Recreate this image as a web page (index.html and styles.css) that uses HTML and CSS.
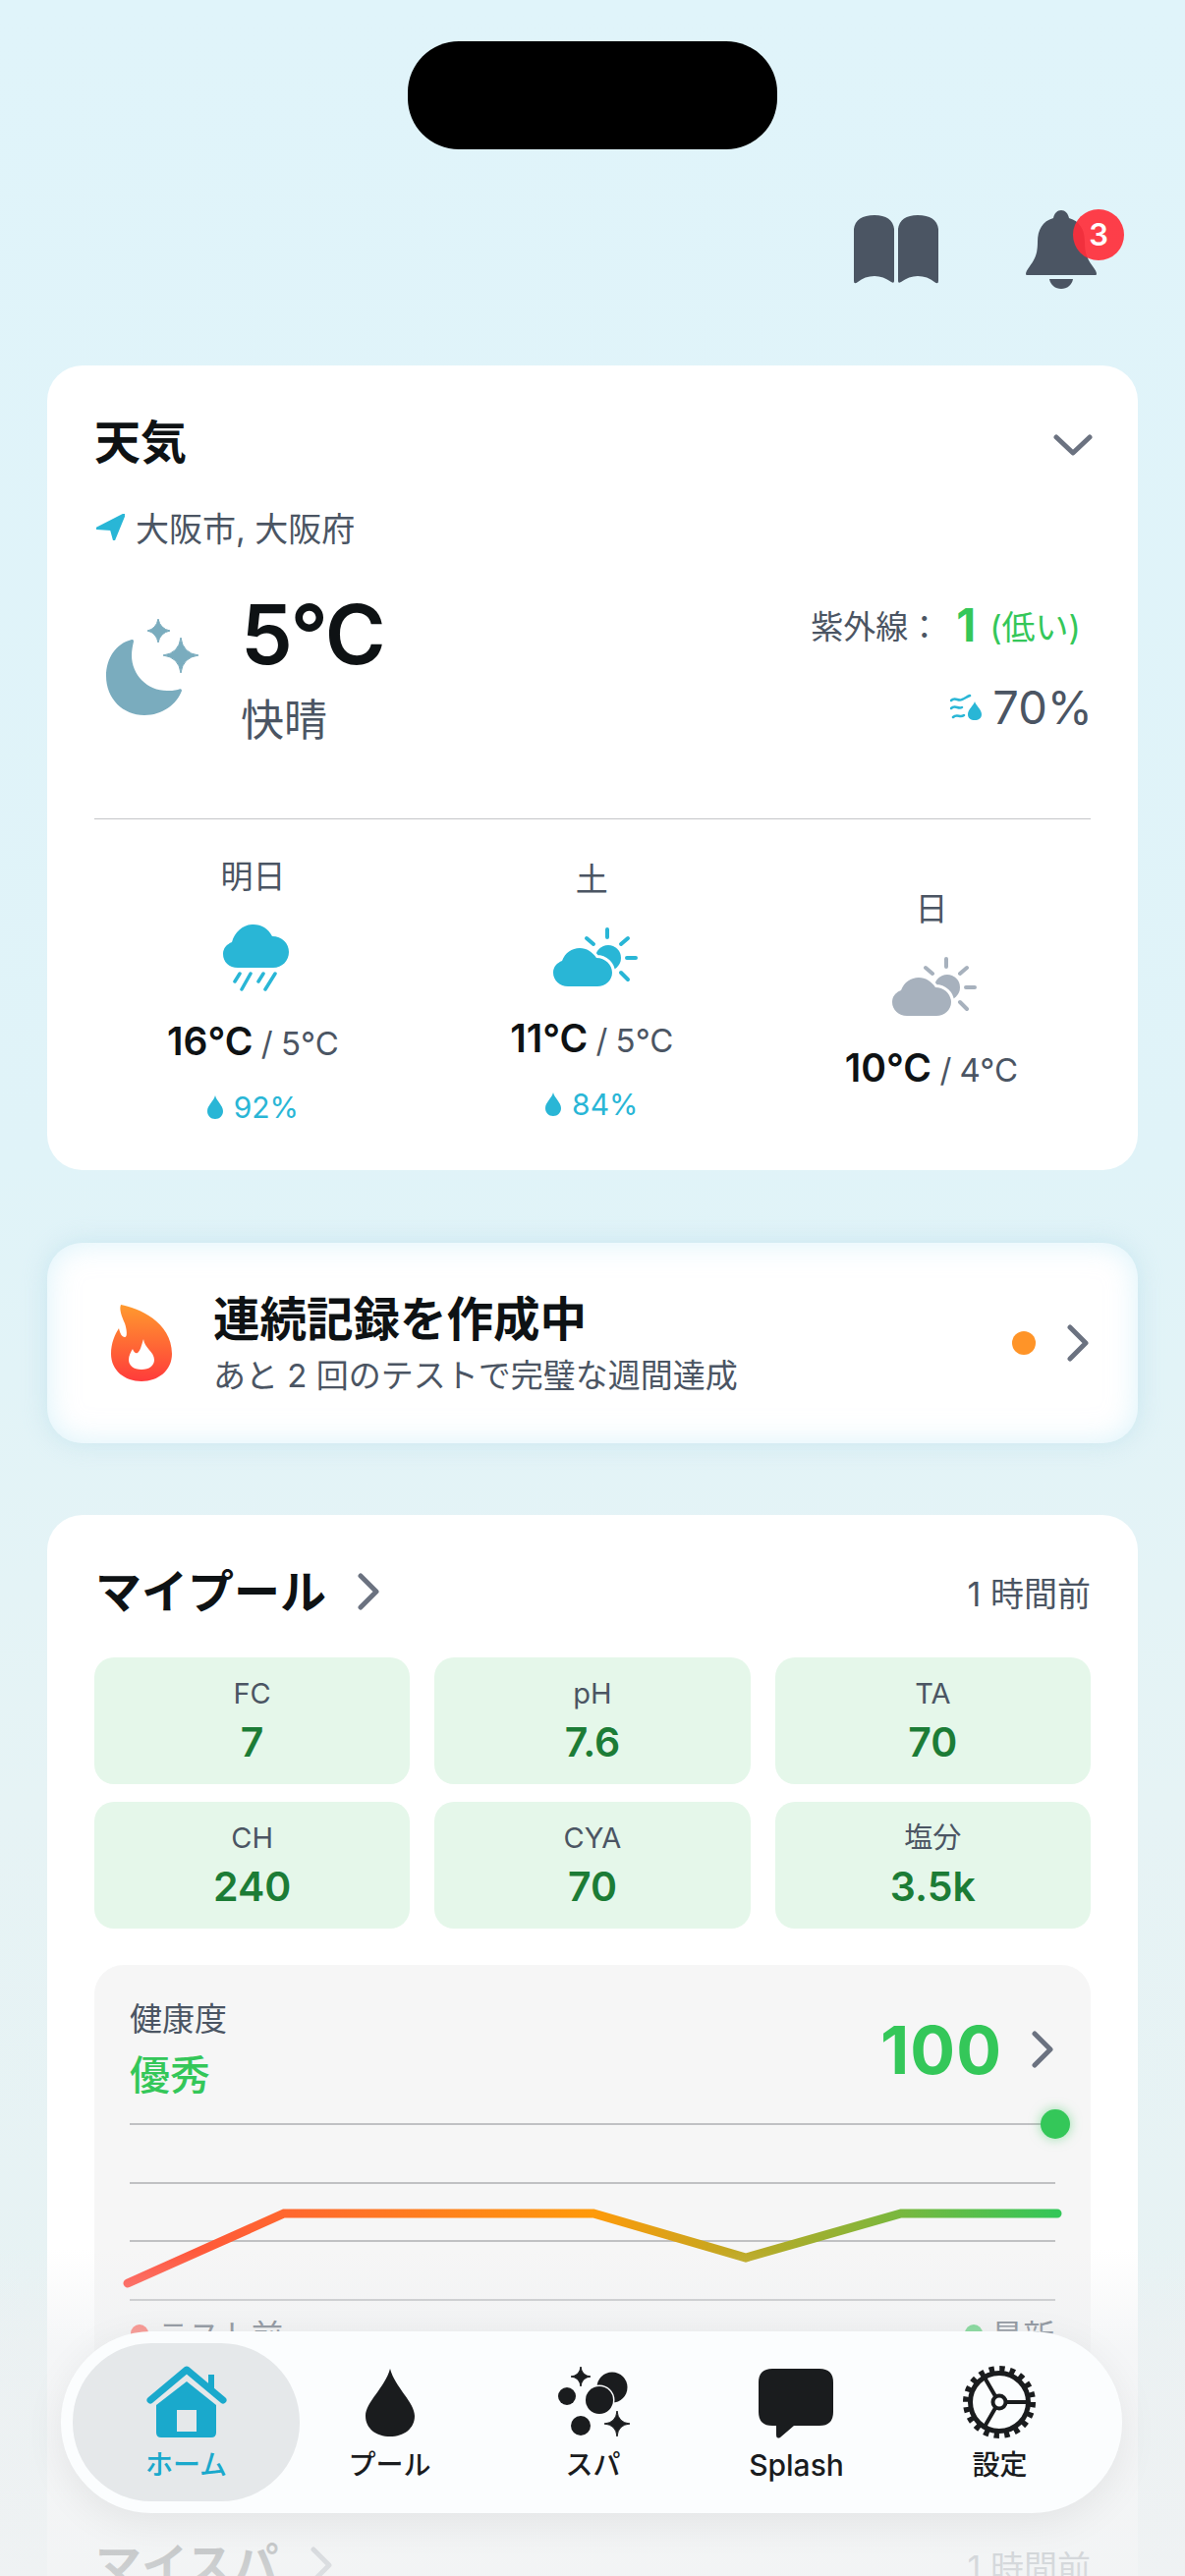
FILE: index.html
```html
<!DOCTYPE html>
<html lang="ja">
<head>
    <meta charset="UTF-8">
    <meta name="viewport" content="width=device-width, initial-scale=1.0">
    <title>ホーム</title>
    <link rel="stylesheet" href="styles.css">
</head>
<body>
    <svg class="defs">
        <defs>
            <linearGradient id="flame_grad" x1="0" y1="0" x2="0" y2="1">
                <stop offset="0" stop-color="#ff9a2e"/>
                <stop offset="1" stop-color="#ff3b3b"/>
            </linearGradient>
            <linearGradient id="line_grad" gradientUnits="userSpaceOnUse" x1="130" y1="0" x2="1076" y2="0">
                <stop offset="0" stop-color="#ff4d42"/>
                <stop offset="0.5" stop-color="#ff9a0a"/>
                <stop offset="1" stop-color="#34c759"/>
            </linearGradient>
        </defs>
        <symbol id="chevron" viewBox="0 0 22 38">
            <path d="M3 3 L19 19 L3 35" fill="none" stroke="currentColor" stroke-width="5" stroke-linecap="round" stroke-linejoin="round"/>
        </symbol>
        <symbol id="drop" viewBox="0 0 16 24">
            <path d="M8 0 C9.500 6 16 10 16 16 C16 20.500 12.500 24 8 24 C3.500 24 0 20.500 0 16 C0 10 6.500 6 8 0Z" fill="currentColor"/>
        </symbol>
        <symbol id="sun_cloud" viewBox="560 942 90 64">
            <circle cx="619" cy="974" r="13" fill="currentColor"/>
            <path d="M578 1003 C570 1003 563 997 563 989 C563 983 567 979 572 977 C575 969 582 964 590 964 C597 964 603 968 607 974 C616 974 623 981 623 989 C623 997 616 1003 608 1003Z" fill="currentColor" stroke="#fff" stroke-width="6" paint-order="stroke"/>
            <path d="M618 945 V953 M597 954 L604 960 M639 954 L632 960 M638 974 H647 M632 989 L639 996" fill="none" stroke="currentColor" stroke-width="4" stroke-linecap="round"/>
        </symbol>
    </svg>

    <div class="island"></div>

    <header class="topbar">
        <svg class="book" viewBox="0 0 86 70">
            <path d="M0 14 Q2 0 21 0 Q39 0 41 14 V67 Q41 70 38 68 Q30 62 21 62 Q11 62 4 68 Q0 71 0 67Z"/>
            <path d="M45 14 Q47 0 65 0 Q84 0 86 14 V67 Q86 71 82 68 Q75 62 65 62 Q56 62 48 68 Q45 70 45 67Z"/>
        </svg>
        <div class="bell_wrap">
            <svg class="bell" viewBox="0 0 72 80">
                <path d="M36 0 C32 0 29 3 28 8 C17 11 12 20 12 32 C12 45 9 50 4 57 C1 61 0 63 0 65 C0 66 1 66 3 66 H69 C71 66 72 66 72 65 C72 63 71 61 68 57 C63 50 60 45 60 32 C60 20 55 11 44 8 C43 3 40 0 36 0Z"/>
                <path d="M24 70 H48 C47 76 42 80 36 80 C30 80 25 76 24 70Z"/>
            </svg>
            <span class="badge">3</span>
        </div>
    </header>

    <section class="card weather">
        <div class="row_between weather_head">
            <h2 class="title_sm">天気</h2>
            <svg class="chev_down" viewBox="0 0 40 22"><path d="M3 3 L20 19 L37 3" fill="none" stroke="currentColor" stroke-width="5" stroke-linecap="round" stroke-linejoin="round"/></svg>
        </div>
        <div class="location">
            <svg class="loc_icon" viewBox="98 525 29 27"><path d="M127 525 L98 540 L113 541 L116 552Z" fill="#29b6d6" stroke="#29b6d6" stroke-width="2" stroke-linejoin="round"/></svg>
            <span>大阪市, 大阪府</span>
        </div>
        <div class="now">
            <svg class="moon" viewBox="100 625 105 110">
                <g fill="#7aacbe">
                    <path d="M134 651 C118 655 108 670 108 688 C108 711 125 728 147 728 C165 728 180 717 185 703 C185 701 183 701 181 702 C177 703 173 703 170 703 C150 703 134 687 134 667 C134 662 135 657 136 653 C136 651 135 651 134 651Z"/>
                    <path d="M161 630 Q163 640 173 642 Q163 644 161 654 Q159 644 150 642 Q159 640 161 630Z" stroke="#7aacbe" stroke-linejoin="round"/>
                    <path d="M184 649 Q186 665 202 667 Q186 669 184 685 Q182 669 166 667 Q182 665 184 649Z" stroke="#7aacbe" stroke-linejoin="round"/>
                </g>
            </svg>
            <div class="now_main">
                <div class="temp_big">5°C</div>
                <div class="condition">快晴</div>
            </div>
            <div class="now_side">
                <div class="uv"><span>紫外線：</span><b>1</b><span class="uv_text">(低い)</span></div>
                <div class="humidity">
                    <svg class="hum_icon" viewBox="0 0 34 28">
                        <path d="M1 7 C5 3 8 8 12 6 C15 5 17 3 20 2 M1 15 C5 11 8 16 12 14 M3 24 C7 20 10 25 14 22" fill="none" stroke="#29b6d6" stroke-width="2.500" stroke-linecap="round"/>
                        <path d="M25 8 C26 12 32 16 32 21 C32 25 29 27 25 27 C21 27 18 25 18 21 C18 16 24 12 25 8Z" fill="#29b6d6"/>
                    </svg>
                    <span>70%</span>
                </div>
            </div>
        </div>
        <div class="forecast">
            <div class="day">
                <div class="day_name">明日</div>
                <svg class="rain_icon" viewBox="220 938 80 72">
                    <path d="M240 985 C231 985 225 979 225 971 C225 965 229 961 234 959 C237 948 246 941 256 941 C264 941 271 945 275 953 C285 953 292 960 292 969 C292 978 285 985 276 985Z" fill="#29b6d6"/>
                    <path d="M242 991 L237 999 M253 991 L244 1007 M266 991 L261 999 M278 991 L268 1007" fill="none" stroke="#29b6d6" stroke-width="3.500" stroke-linecap="round"/>
                </svg>
                <div class="day_temp"><b>16°C</b> / 5°C</div>
                <div class="rain"><svg class="rain_drop"><use href="#drop"/></svg>92%</div>
            </div>
            <div class="day">
                <div class="day_name">土</div>
                <svg class="sun_icon blue"><use href="#sun_cloud"/></svg>
                <div class="day_temp"><b>11°C</b> / 5°C</div>
                <div class="rain"><svg class="rain_drop"><use href="#drop"/></svg>84%</div>
            </div>
            <div class="day">
                <div class="day_name">日</div>
                <svg class="sun_icon grey"><use href="#sun_cloud"/></svg>
                <div class="day_temp"><b>10°C</b> / 4°C</div>
            </div>
        </div>
    </section>

    <section class="streak">
        <svg class="flame" viewBox="113 1328 62 78">
            <path d="M123 1328 C140 1331 175 1345 175 1378 C175 1395 161 1406 144 1406 C127 1406 113 1395 113 1378 C113 1367 117 1358 121 1352 C122 1357 124 1361 127 1361 C130 1361 129 1353 127 1347 C124 1340 121 1333 123 1328Z" fill="url(#flame_grad)"/>
            <path d="M146 1363 C147 1372 157 1376 157 1384 C157 1390 152 1394 144 1394 C136 1394 131 1390 131 1384 C131 1380 133 1376 135 1373 C136 1376 138 1378 140 1377 C143 1375 144 1369 146 1363Z" fill="#fff"/>
        </svg>
        <div class="streak_text">
            <div class="streak_title">連続記録を作成中</div>
            <div class="streak_sub">あと 2 回のテストで完璧な週間達成</div>
        </div>
        <span class="streak_dot"></span>
        <svg class="chev"><use href="#chevron"/></svg>
    </section>

    <section class="card pool">
        <div class="row_between section_head">
            <div class="section_title">
                <h2 class="title_lg">マイプール</h2>
                <svg class="chev"><use href="#chevron"/></svg>
            </div>
            <span class="updated">1 時間前</span>
        </div>
        <div class="metrics">
            <div class="metric"><span>FC</span><b>7</b></div>
            <div class="metric"><span>pH</span><b>7.6</b></div>
            <div class="metric"><span>TA</span><b>70</b></div>
            <div class="metric"><span>CH</span><b>240</b></div>
            <div class="metric"><span>CYA</span><b>70</b></div>
            <div class="metric"><span>塩分</span><b>3.5k</b></div>
        </div>
        <div class="health">
            <div class="row_between health_head">
                <div>
                    <div class="health_label">健康度</div>
                    <div class="health_grade">優秀</div>
                </div>
                <div class="health_score">
                    <b>100</b>
                    <svg class="chev"><use href="#chevron"/></svg>
                </div>
            </div>
            <svg class="chart" viewBox="96 2145 1014 210">
                <path d="M132 2162 H1074 M132 2222 H1074 M132 2281 H1074 M132 2341 H1074" stroke="#aeb0b2" stroke-width="1.500"/>
                <path d="M130 2324 L289 2253 H604 L759 2298 L917 2253 H1076" fill="none" stroke="url(#line_grad)" stroke-width="9" stroke-linecap="round" stroke-linejoin="miter"/>
                <circle class="chart_dot" cx="1074" cy="2162" r="15" fill="#34c759"/>
            </svg>
            <div class="row_between legend">
                <span class="legend_item"><i class="dot_red"></i>テスト前</span>
                <span class="legend_item"><i class="dot_green"></i>最新</span>
            </div>
        </div>
        <div class="row_between section_head next">
            <div class="section_title">
                <h2 class="title_lg">マイスパ</h2>
                <svg class="chev"><use href="#chevron"/></svg>
            </div>
            <span class="updated">1 時間前</span>
        </div>
    </section>

    <div class="fade"></div>

    <nav class="tabbar">
        <a class="tab active">
            <svg class="tab_icon" viewBox="150 2408 82 74">
                <path d="M160 2448 L191 2424 L221 2448 V2476 Q221 2481 216 2481 H165 Q160 2481 160 2476Z" fill="#1aa9cc"/>
                <path d="M154 2443 L191 2412 L228 2443" fill="none" stroke="#1aa9cc" stroke-width="7" stroke-linecap="round" stroke-linejoin="round"/>
                <path d="M213 2417 H219 V2432 H213Z" fill="#1aa9cc"/>
                <rect x="181" y="2453" width="20" height="22" fill="#e5e8ea"/>
            </svg>
            <span>ホーム</span>
        </a>
        <a class="tab">
            <svg class="tab_icon" viewBox="357 2408 82 74">
                <path d="M398 2411 C403 2430 423 2445 423 2459 C423 2472 412 2480 398 2480 C384 2480 373 2472 373 2459 C373 2445 393 2430 398 2411Z" fill="#1a1c1e"/>
            </svg>
            <span>プール</span>
        </a>
        <a class="tab">
            <svg class="tab_icon" viewBox="563 2408 82 74">
                <g fill="#1a1c1e">
                    <circle cx="623" cy="2430" r="15.500"/>
                    <circle cx="610" cy="2443" r="14" stroke="#fbfdfe" stroke-width="3" paint-order="stroke"/>
                    <circle cx="577" cy="2439" r="9"/>
                    <circle cx="591" cy="2469" r="10"/>
                    <path d="M591 2409 Q592 2418 601 2419 Q592 2420 591 2429 Q590 2420 581 2419 Q590 2418 591 2409Z" stroke="#1a1c1e" stroke-linejoin="round"/>
                    <path d="M628 2454 Q629 2466 641 2467 Q629 2468 628 2480 Q627 2468 615 2467 Q627 2466 628 2454Z" stroke="#1a1c1e" stroke-linejoin="round"/>
                </g>
            </svg>
            <span>スパ</span>
        </a>
        <a class="tab">
            <svg class="tab_icon" viewBox="769 2408 82 74">
                <path d="M785 2411 H833 Q847 2411 847 2425 V2455 Q847 2469 833 2469 H807 L793 2481 Q789 2483 789 2478 V2469 H785 Q771 2469 771 2455 V2425 Q771 2411 785 2411Z" fill="#1a1c1e"/>
            </svg>
            <span class="tab_latin">Splash</span>
        </a>
        <a class="tab">
            <svg class="tab_icon" viewBox="975 2408 82 74">
                <g fill="none" stroke="#1a1c1e">
                    <circle cx="1015" cy="2445" r="29.500" stroke-width="5"/>
                    <circle cx="1015" cy="2445" r="34" stroke-width="6" stroke-dasharray="5.340 5.340"/>
                    <circle cx="1015" cy="2445" r="6.500" stroke-width="4"/>
                    <path d="M1022 2445 H1044 M1011 2439 L1000 2420 M1011 2451 L1000 2470" stroke-width="4"/>
                </g>
            </svg>
            <span>設定</span>
        </a>
    </nav>
</body>
</html>
```

FILE: styles.css
```css
* {
    box-sizing: border-box;
}
html, body {
    margin: 0;
    padding: 0;
}
body {
    width: 1206px;
    height: 2622px;
    overflow: hidden;
    position: relative;
    padding-top: 42px;
    background: linear-gradient(to bottom, #e0f4fa 0%, #e0f3f8 45%, #e6f3f5 70%, #e8f2f3 100%);
    font-family: Inter, "Noto Sans CJK JP", sans-serif;
    color: #0e1214;
    text-spacing-trim: space-all;
}
h2 {
    margin: 0;
}
.defs {
    position: absolute;
    width: 0;
    height: 0;
}
.island {
    width: 376px;
    height: 110px;
    margin: 0 auto;
    border-radius: 52px;
    background: black;
}
.topbar {
    display: flex;
    justify-content: flex-end;
    align-items: flex-end;
    gap: 89px;
    height: 140px;
    padding-right: 90px;
    padding-bottom: 3px;
}
.book {
    width: 86px;
    height: 70px;
    fill: #4b5563;
}
.bell_wrap {
    position: relative;
    width: 72px;
    height: 80px;
    margin-bottom: -5px;
}
.bell {
    width: 72px;
    height: 80px;
    fill: #4b5563;
    display: block;
}
.badge {
    position: absolute;
    left: 48px;
    top: -1px;
    width: 52px;
    height: 52px;
    border-radius: 50%;
    background: rgba(255, 46, 58, 0.92);
    color: white;
    font-size: 31px;
    font-weight: 600;
    line-height: 52px;
    text-align: center;
}
.card {
    margin: 0 48px;
    padding: 0 48px;
    border-radius: 36px;
    background: white;
}
.row_between {
    display: flex;
    justify-content: space-between;
    align-items: center;
}

/* weather */
.weather {
    margin-top: 80px;
}
.weather_head {
    height: 106px;
    padding-top: 50px;
}
.title_sm {
    font-size: 47px;
    font-weight: 700;
    line-height: 60px;
}
.chev_down {
    width: 40px;
    height: 22px;
    margin-right: -2px;
    margin-top: 5px;
    color: #6b7280;
}
.location {
    display: flex;
    align-items: center;
    gap: 11px;
    height: 56px;
    margin-top: 30px;
    padding-left: 2px;
    font-size: 34px;
    color: #4b5563;
}
.loc_icon {
    width: 29px;
    height: 27px;
}
.now {
    display: flex;
    margin-top: 32px;
    height: 166px;
}
.moon {
    width: 105px;
    height: 110px;
    margin-top: 29px;
    margin-left: 4px;
}
.now_main {
    margin-left: 40px;
}
.temp_big {
    font-size: 84px;
    font-weight: 600;
    letter-spacing: -2px;
    line-height: 100px;
}
.condition {
    margin-top: 7px;
    font-size: 44px;
    line-height: 60px;
    color: #4b5563;
}
.now_side {
    margin-left: auto;
    text-align: right;
    color: #4b5563;
}
.uv {
    display: flex;
    justify-content: flex-end;
    align-items: center;
    height: 48px;
    margin-top: 16px;
    margin-right: 10px;
    font-size: 33px;
}
.uv b {
    margin-left: 16px;
    margin-right: 14px;
    font-size: 46px;
    font-weight: 700;
    color: #34c759;
}
.uv_text {
    font-size: 34px;
    color: #34c759;
}
.humidity {
    display: flex;
    justify-content: flex-end;
    align-items: center;
    gap: 9px;
    margin-top: 28px;
    margin-right: -2px;
    font-size: 47px;
    font-weight: 400;
    line-height: 64px;
}
.hum_icon {
    width: 34px;
    height: 28px;
}
.forecast {
    display: flex;
    justify-content: space-between;
    align-items: center;
    margin-top: 71px;
    padding: 38px 74px 44px;
    border-top: 1.5px solid #c4c6c8;
}
.day {
    display: flex;
    flex-direction: column;
    align-items: center;
}
.day_name {
    font-size: 33px;
    line-height: 40px;
    color: #4b5563;
}
.rain_icon {
    width: 80px;
    height: 72px;
    margin-top: 26px;
    margin-left: 10px;
}
.sun_icon {
    width: 90px;
    height: 64px;
    margin-top: 28px;
    margin-left: 5px;
}
.blue {
    color: #29b6d6;
}
.grey {
    color: #a7b1bd;
}
.day_temp {
    margin-top: 25px;
    font-size: 33px;
    line-height: 50px;
    word-spacing: -1px;
    white-space: nowrap;
    color: #4b5563;
}
.day_temp b {
    font-size: 39px;
    font-weight: 600;
    color: #0e1214;
}
.rain {
    display: flex;
    align-items: center;
    gap: 11px;
    margin-top: 20px;
    font-size: 30px;
    line-height: 40px;
    color: #29b6d6;
}
.rain_drop {
    width: 16px;
    height: 24px;
    color: #29b6d6;
}

/* streak */
.streak {
    display: flex;
    align-items: center;
    height: 204px;
    margin: 74px 48px 0;
    padding: 0 50px 0 65px;
    border-radius: 36px;
    background: white;
    box-shadow: inset 0 0 30px rgba(190, 232, 245, 0.55), 0 0 24px rgba(170, 215, 230, 0.45);
}
.flame {
    width: 62px;
    height: 78px;
}
.streak_text {
    margin-left: 42px;
}
.streak_title {
    font-size: 47.500px;
    font-weight: 700;
    line-height: 60px;
}
.streak_sub {
    margin-top: 5px;
    font-size: 33px;
    line-height: 44px;
    color: #4b5563;
}
.streak_dot {
    width: 24px;
    height: 24px;
    margin-left: auto;
    margin-right: 32px;
    border-radius: 50%;
    background: #ff9428;
}
.chev {
    width: 22px;
    height: 38px;
    color: #6b7280;
}

/* pool */
.pool {
    margin-top: 73px;
    padding-top: 48px;
    height: 1200px;
}
.section_head {
    height: 60px;
}
.section_head.next {
    margin-top: 161px;
}
.section_title {
    display: flex;
    align-items: center;
    gap: 32px;
    margin-left: 1px;
}
.title_lg {
    font-size: 47px;
    font-weight: 700;
    line-height: 60px;
}
.updated {
    font-size: 34px;
    color: #4b5563;
}
.metrics {
    display: grid;
    grid-template-columns: repeat(3, 1fr);
    gap: 18px 25px;
    margin-top: 37px;
}
.metric {
    display: flex;
    flex-direction: column;
    align-items: center;
    height: 129px;
    padding-top: 17px;
    border-radius: 20px;
    background: #e5f7ea;
}
.metric span {
    font-size: 29px;
    line-height: 40px;
    color: #4b5563;
}
.metric b {
    margin-top: 4px;
    font-size: 41px;
    font-weight: 600;
    line-height: 50px;
    color: #1c7c36;
}
.health {
    height: 420px;
    margin-top: 37px;
    border-radius: 30px;
    background: #f6f6f6;
}
.health_head {
    height: 145px;
    padding: 26px 37px 0 36px;
}
.health_label {
    font-size: 33px;
    line-height: 44px;
    color: #4b5563;
}
.health_grade {
    margin-top: 9px;
    font-size: 41px;
    font-weight: 500;
    line-height: 52px;
    color: #34c759;
}
.health_score {
    display: flex;
    align-items: center;
    gap: 30px;
    margin-bottom: 0;
    margin-right: 1px;
}
.health_score b {
    font-size: 68px;
    font-weight: 700;
    letter-spacing: 1px;
    line-height: 80px;
    color: #34c759;
}
.chart {
    display: block;
    width: 1014px;
    height: 210px;
    overflow: visible;
}
.chart_dot {
    filter: drop-shadow(0 0 6px rgba(52, 199, 89, 0.5));
}
.legend {
    height: 40px;
    padding: 0 37px;
    font-size: 32px;
    color: #4b5563;
}
.legend_item {
    display: flex;
    align-items: center;
    gap: 9px;
}
.legend_item i {
    width: 18px;
    height: 18px;
    border-radius: 50%;
}
.dot_red {
    background: #ff4d42;
}
.dot_green {
    background: #34c759;
}

/* overlays */
.fade {
    position: absolute;
    left: 0;
    right: 0;
    top: 2290px;
    bottom: 0;
    background: linear-gradient(to bottom, rgba(238, 240, 242, 0) 0%, rgba(238, 240, 242, 0.6) 30%, rgba(240, 242, 243, 0.85) 100%);
}
.tabbar {
    position: absolute;
    left: 62px;
    top: 2373px;
    width: 1080px;
    height: 185px;
    padding: 12px 24px;
    display: grid;
    grid-template-columns: repeat(5, 207px);
    border-radius: 92px;
    background: #fbfdfe;
    box-shadow: 0 10px 40px rgba(0, 0, 0, 0.07);
}
.tab {
    display: flex;
    flex-direction: column;
    align-items: center;
    padding-top: 23px;
    font-size: 28px;
    font-weight: 500;
    line-height: 44px;
    color: #1a1c1e;
}
.tab_icon {
    width: 82px;
    height: 74px;
    margin-bottom: 5px;
}
.tab_latin {
    font-size: 30px;
}
.active {
    margin: 0 -12px;
    border-radius: 80px;
    background: #e5e8ea;
    color: #1aa9cc;
}
```
